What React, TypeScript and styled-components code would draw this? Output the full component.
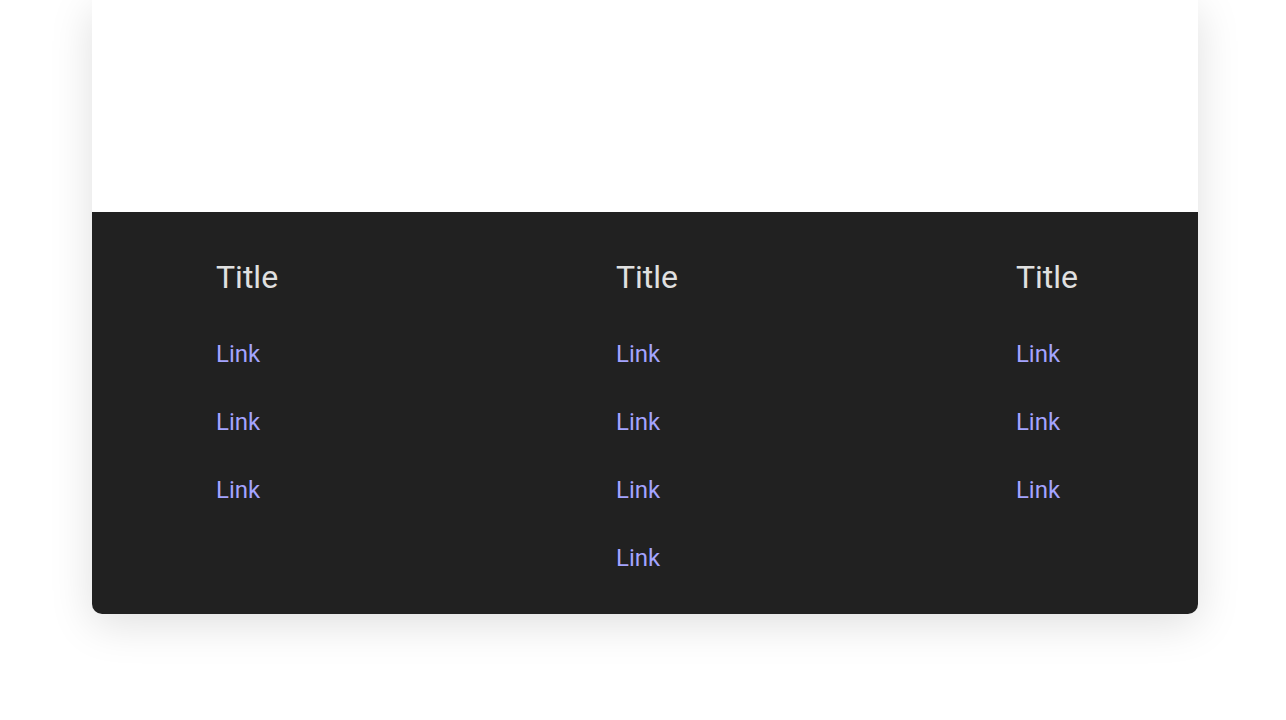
import React from 'react';
import styled, {createGlobalStyle} from 'styled-components';

const GlobalStyle = createGlobalStyle`
  html, body {
    margin: 0;
    padding: 0;
    background: #ffffff;
    font-family: Roboto, "Liberation Sans", Arial, sans-serif;
  }
`;

const columns = [
    {title: 'Title', links: ['Link', 'Link', 'Link']},
    {title: 'Title', links: ['Link', 'Link', 'Link', 'Link']},
    {title: 'Title', links: ['Link', 'Link', 'Link']},
];

/**
 * Card with a dark footer at its bottom
 */
export default function App() {
    return (
        <Page>
            <GlobalStyle />
            <Card>
                <CardBody />
                <Footer>
                    {columns.map((col, i) => (
                        <Column key={i}>
                            <ColumnTitle>{col.title}</ColumnTitle>
                            <LinkList>
                                {col.links.map((link, j) => (
                                    <FooterLink key={j} href="#">{link}</FooterLink>
                                ))}
                            </LinkList>
                        </Column>
                    ))}
                </Footer>
            </Card>
        </Page>
    );
}

const Page = styled.div`
  display: flex;
  padding: 0 0 106px 92px;
`;

const Card = styled.div`
  width: 1106px;
  display: flex;
  flex-direction: column;
  background: #ffffff;
  border-radius: 0 0 10px 10px;
  box-shadow: 0 10px 44px rgba(0, 0, 0, 0.13);
  overflow: hidden;
`;

const CardBody = styled.div`
  height: 212px;
  background: #ffffff;
`;

const Footer = styled.footer`
  display: flex;
  justify-content: space-between;
  align-items: flex-start;
  background: #212121;
  padding: 45px 120px 42px 124px;
`;

const Column = styled.div`
  display: flex;
  flex-direction: column;
`;

const ColumnTitle = styled.h3`
  margin: 0 0 43px;
  font-size: 32px;
  line-height: 40px;
  font-weight: 400;
  color: #e0e0e0;
`;

const LinkList = styled.div`
  display: flex;
  flex-direction: column;
  gap: 40px;
`;

const FooterLink = styled.a`
  font-size: 24px;
  line-height: 28px;
  color: #a4a4ff;
  text-decoration: none;
`;
